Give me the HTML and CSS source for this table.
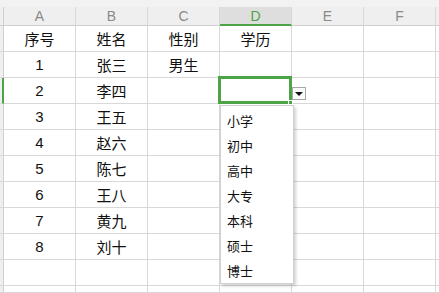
FILE: index.html
```html
<!DOCTYPE html>
<html lang="zh">
<head>
<meta charset="utf-8">
<link rel="stylesheet" href="styles.css">
</head>
<body>
<div class="sheet">
  <div class="topstrip"></div>
  <div class="grid">
    <div class="rh corner"></div>
    <div class="ch">A</div>
    <div class="ch">B</div>
    <div class="ch">C</div>
    <div class="ch active">D</div>
    <div class="ch">E</div>
    <div class="ch">F</div>
    <div class="ch last"></div>

    <div class="rh"></div>
    <div class="c">序号</div><div class="c">姓名</div><div class="c">性别</div><div class="c">学历</div><div class="c"></div><div class="c"></div><div class="c last"></div>

    <div class="rh"></div>
    <div class="c num">1</div><div class="c">张三</div><div class="c">男生</div><div class="c"></div><div class="c"></div><div class="c"></div><div class="c last"></div>

    <div class="rh sel"></div>
    <div class="c num">2</div><div class="c">李四</div><div class="c"></div>
    <div class="c selcell">
      <div class="selbox"><span class="handle"></span></div>
      <div class="ddbtn"><span class="tri"></span></div>
      <ul class="list">
        <li>小学</li><li>初中</li><li>高中</li><li>大专</li><li>本科</li><li>硕士</li><li>博士</li>
      </ul>
    </div>
    <div class="c"></div><div class="c"></div><div class="c last"></div>

    <div class="rh"></div>
    <div class="c num">3</div><div class="c">王五</div><div class="c"></div><div class="c"></div><div class="c"></div><div class="c"></div><div class="c last"></div>

    <div class="rh"></div>
    <div class="c num">4</div><div class="c">赵六</div><div class="c"></div><div class="c"></div><div class="c"></div><div class="c"></div><div class="c last"></div>

    <div class="rh"></div>
    <div class="c num">5</div><div class="c">陈七</div><div class="c"></div><div class="c"></div><div class="c"></div><div class="c"></div><div class="c last"></div>

    <div class="rh"></div>
    <div class="c num">6</div><div class="c">王八</div><div class="c"></div><div class="c"></div><div class="c"></div><div class="c"></div><div class="c last"></div>

    <div class="rh"></div>
    <div class="c num">7</div><div class="c">黄九</div><div class="c"></div><div class="c"></div><div class="c"></div><div class="c"></div><div class="c last"></div>

    <div class="rh"></div>
    <div class="c num">8</div><div class="c">刘十</div><div class="c"></div><div class="c"></div><div class="c"></div><div class="c"></div><div class="c last"></div>

    <div class="rh"></div>
    <div class="c"></div><div class="c"></div><div class="c"></div><div class="c"></div><div class="c"></div><div class="c"></div><div class="c last"></div>

    <div class="rh"></div>
    <div class="c"></div><div class="c"></div><div class="c"></div><div class="c"></div><div class="c"></div><div class="c"></div><div class="c last"></div>
  </div>
</div>
</body>
</html>
```
FILE: styles.css
```css
* { box-sizing: border-box; }
html, body { margin: 0; padding: 0; background: #ffffff; }
body { width: 439px; height: 293px; overflow: hidden; }

.sheet { width: 439px; height: 293px; overflow: hidden; }

.topstrip { height: 7px; background: #f2f2f2; }

.grid {
  display: grid;
  grid-template-columns: 4px 72px 72px 72px 72px 72px 72px 1fr;
  grid-template-rows: 19px repeat(10, 26px) 7px;
}

.rh {
  background: #efefef;
  border-right: 1px solid #cfcfcf;
  border-bottom: 1px solid #d8d8d8;
}
.rh.sel { border-right: 2px solid #4ca446; }
.rh.corner { border-bottom: 1px solid #cfcfcf; }

.ch {
  background: #efefef;
  border-right: 1px solid #d8d8d8;
  border-bottom: 1px solid #cfcfcf;
  color: #8a8a8a;
  font-family: "Liberation Sans", Arial, sans-serif;
  font-size: 14px;
  display: flex;
  align-items: center;
  justify-content: center;
  padding-bottom: 1px;
}
.ch.active {
  background: #dedede;
  color: #4ca446;
  border-bottom: 2px solid #4ca446;
  padding-bottom: 0;
}
.ch.last { border-right: none; }

.c {
  border-right: 1px solid #d8d8d8;
  border-bottom: 1px solid #d8d8d8;
  display: flex;
  align-items: center;
  justify-content: center;
  font-family: "Noto Sans CJK SC", "Liberation Sans", sans-serif;
  font-size: 15px;
  color: #111;
  line-height: 1;
}
.c.num { font-family: "Liberation Sans", Arial, sans-serif; font-size: 15px; }
.c.last { border-right: none; }

.selcell { position: relative; }

.selbox {
  position: absolute;
  left: -2px;
  top: -2px;
  width: 74px;
  height: 28px;
  border: 3px solid #4ca446;
  z-index: 2;
}
.handle {
  position: absolute;
  right: -4px;
  bottom: -4px;
  width: 5px;
  height: 5px;
  background: #4ca446;
  border: 1px solid #fff;
}

.ddbtn {
  position: absolute;
  left: 72px;
  top: 9px;
  width: 14px;
  height: 13px;
  background: #fbfbfb;
  border: 1px solid #a8a8a8;
  display: flex;
  align-items: center;
  justify-content: center;
  z-index: 3;
}
.tri {
  width: 0;
  height: 0;
  border-left: 4px solid transparent;
  border-right: 4px solid transparent;
  border-top: 4px solid #111;
  margin-top: 1px;
}

.list {
  position: absolute;
  left: 0;
  top: 27px;
  width: 74px;
  margin: 0;
  padding: 2px 0 0 0;
  list-style: none;
  background: #fff;
  border: 1px solid #d0d0d0;
  box-shadow: 2px 2px 3px rgba(0,0,0,0.18);
  z-index: 4;
}
.list li {
  height: 25px;
  display: flex;
  align-items: center;
  padding-left: 6px;
  font-family: "Noto Sans CJK SC", sans-serif;
  font-size: 13px;
  color: #111;
}
```
